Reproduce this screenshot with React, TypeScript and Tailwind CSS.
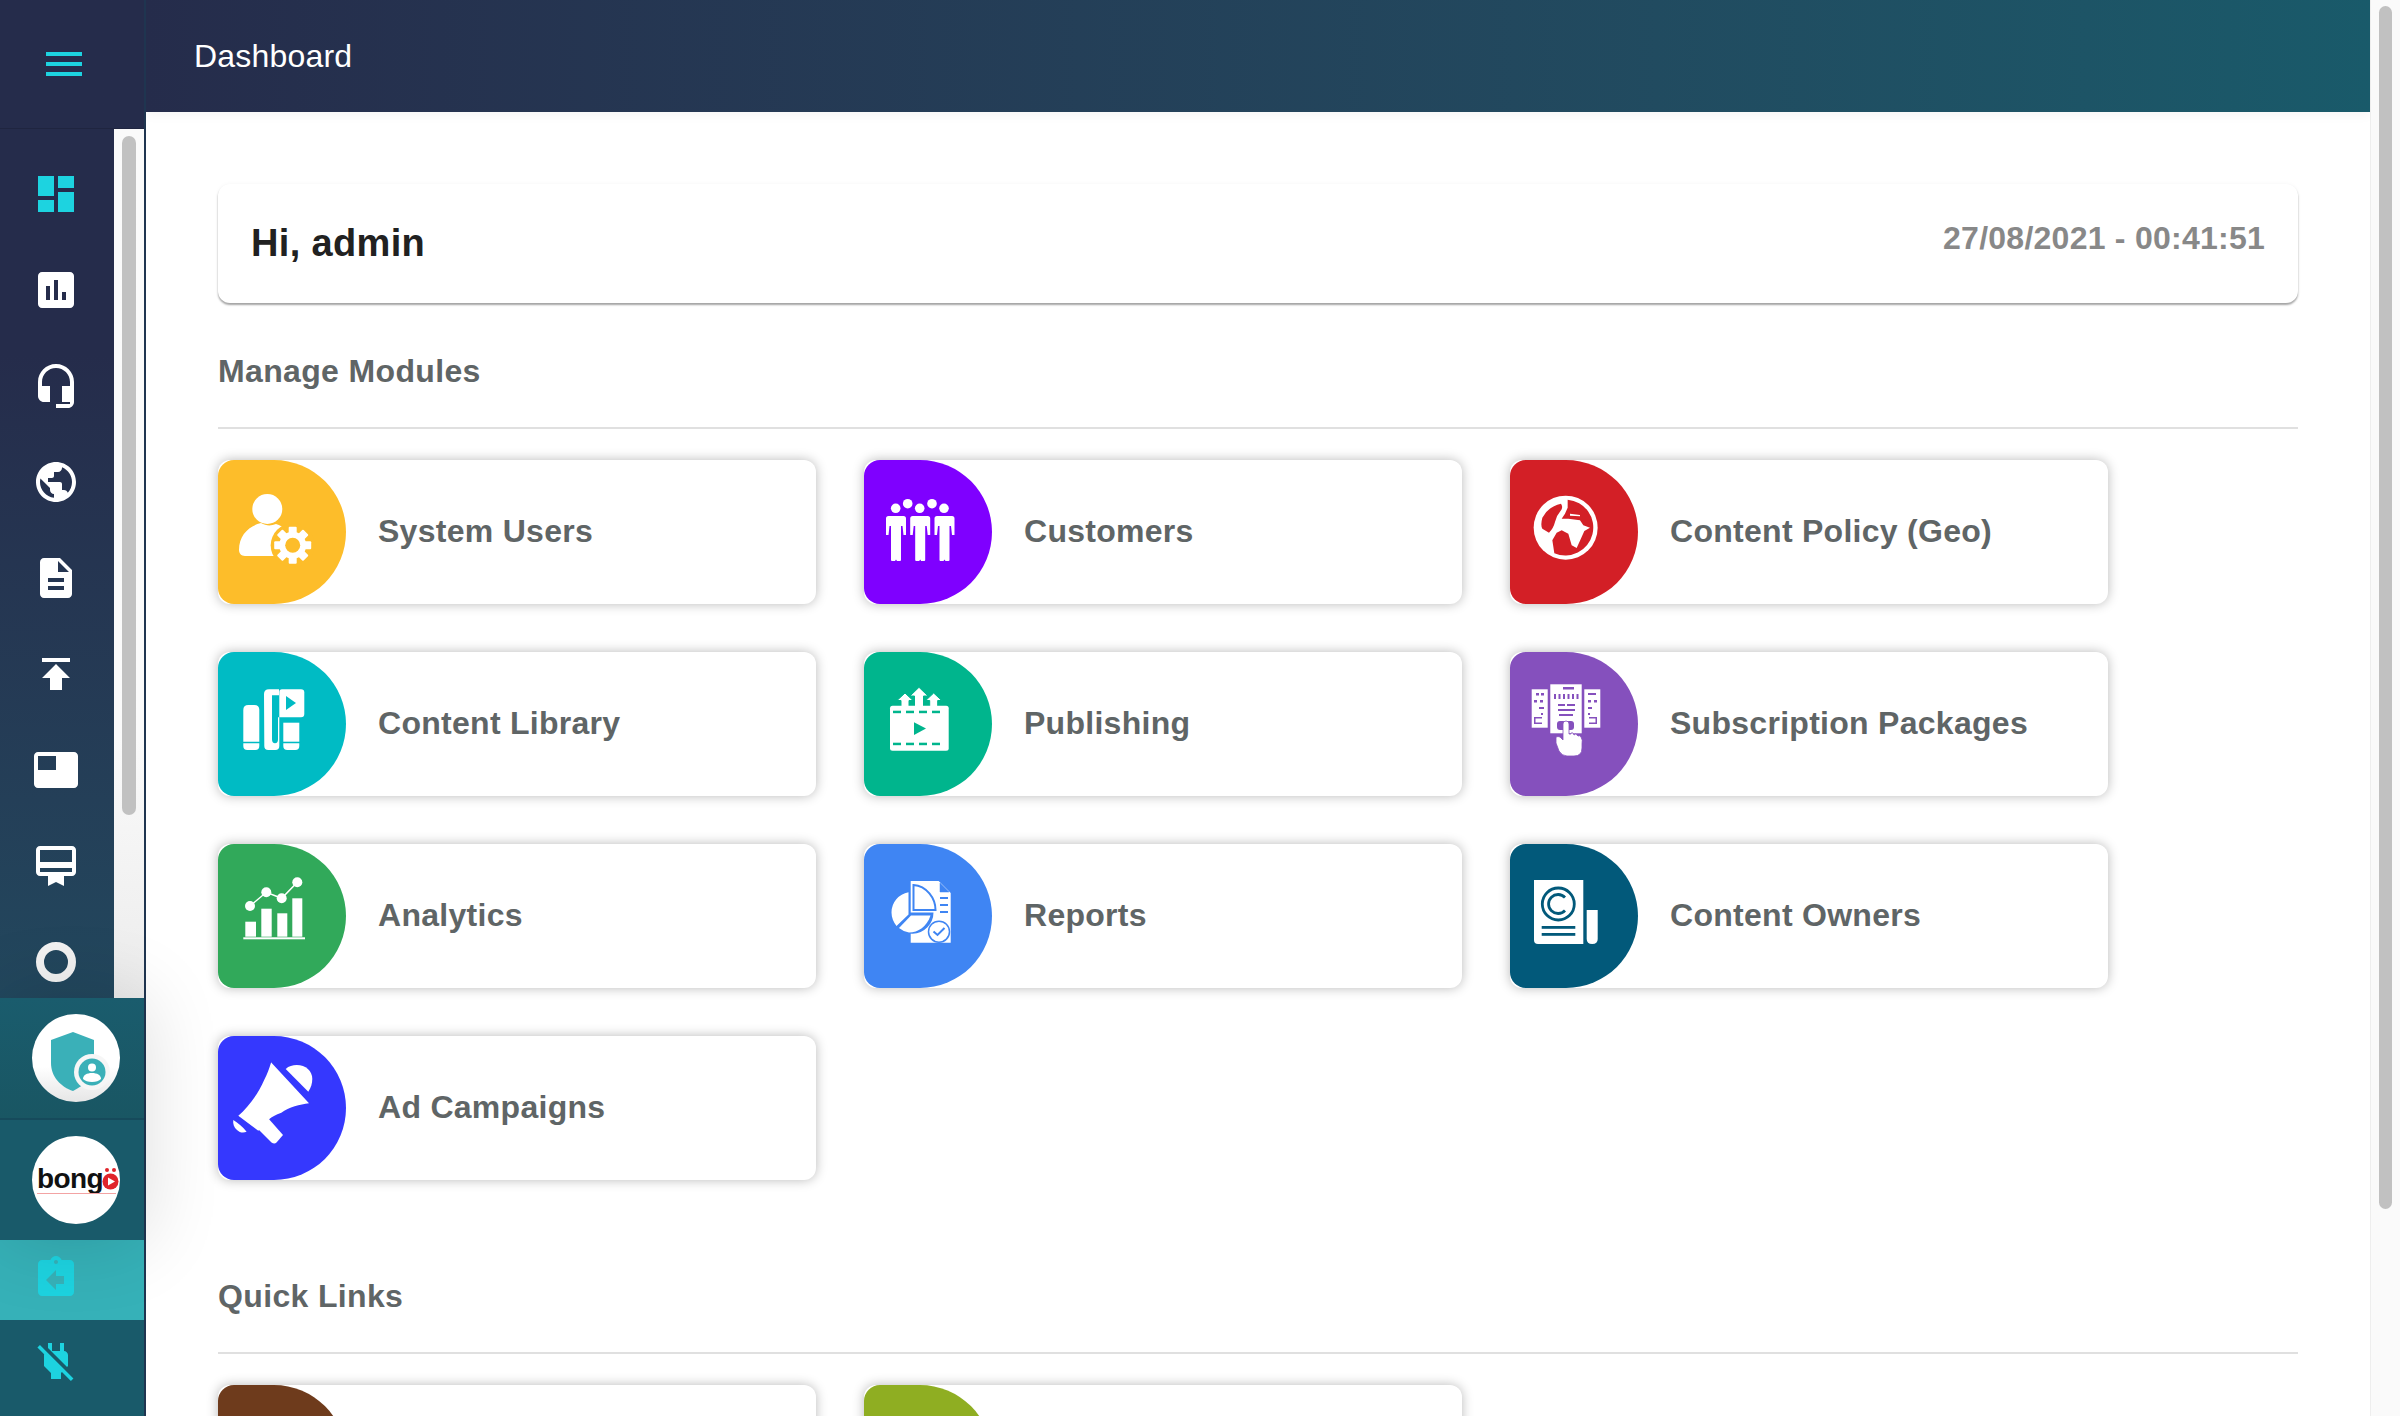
const MatIcon = ({ d, className }: { d: string; className: string }) => (
  <svg viewBox="0 0 24 24" className={`w-12 h-12 block fill-current ${className}`}>
    <path d={d} />
  </svg>
);

const navIcons = [
  { d: "M3 13h8V3H3v10zm0 8h8v-6H3v6zm10 0h8V11h-8v10zm0-18v6h8V3h-8z", className: "text-[#1dd3e0]" },
  { d: "M19 3H5c-1.1 0-2 .9-2 2v14c0 1.1.9 2 2 2h14c1.1 0 2-.9 2-2V5c0-1.1-.9-2-2-2zM9 17H7v-7h2v7zm4 0h-2V7h2v10zm4 0h-2v-4h2v4z", className: "text-white" },
  { d: "M12 1c-4.97 0-9 4.03-9 9v7c0 1.66 1.34 3 3 3h3v-8H5v-2c0-3.87 3.13-7 7-7s7 3.13 7 7v2h-4v8h4v1h-7v2h6c1.66 0 3-1.34 3-3V10c0-4.97-4.03-9-9-9z", className: "text-white" },
  { d: "M12 2C6.48 2 2 6.48 2 12s4.48 10 10 10 10-4.48 10-10S17.52 2 12 2zm-1 17.93c-3.95-.49-7-3.85-7-7.93 0-.62.08-1.21.21-1.79L9 15v1c0 1.1.9 2 2 2v1.93zm6.9-2.54c-.26-.81-1-1.39-1.9-1.39h-1v-3c0-.55-.45-1-1-1H8v-2h2c.55 0 1-.45 1-1V7h2c1.1 0 2-.9 2-2v-.41c2.93 1.19 5 4.06 5 7.41 0 2.08-.8 3.97-2.1 5.39z", className: "text-white" },
  { d: "M14 2H6c-1.1 0-1.99.9-1.99 2L4 20c0 1.1.89 2 1.99 2H18c1.1 0 2-.9 2-2V8l-6-6zm2 16H8v-2h8v2zm0-4H8v-2h8v2zm-3-5V3.5L18.5 9H13z", className: "text-white" },
  { d: "M5 4v2h14V4H5zm0 10h4v6h6v-6h4l-7-7-7 7z", className: "text-white" },
  { d: "M21 3H3c-1.1 0-2 .9-2 2v14c0 1.1.9 2 2 2h18c1.1 0 2-.9 2-2V5c0-1.1-.9-2-2-2zm-9 9H3V5h9v7z", className: "text-white" },
  { d: "M20 2H4c-1.11 0-2 .89-2 2v11c0 1.11.89 2 2 2h4v5l4-2 4 2v-5h4c1.11 0 2-.89 2-2V4c0-1.11-.89-2-2-2zm0 13H4v-2h16v2zm0-5H4V4h16v6z", className: "text-white" },
];

const TileSvg = ({ children }: { children: React.ReactNode }) => (
  <svg viewBox="0 0 128 144" className="w-[128px] h-[144px] block">
    {children}
  </svg>
);

const gearTeeth = [0, 45, 90, 135, 180, 225, 270, 315];

const SystemUsersIcon = () => (
  <TileSvg>
    <circle cx="49.3" cy="49" r="15" fill="#fff" />
    <path d="M21 90c0-15 10-24 22-27 5 3 10 3 15 1 8 2 12 8 14 18l-10 14H27c-4 0-6-3-6-6z" fill="#fff" />
    <circle cx="74.7" cy="85.3" r="22" fill="#fdbd2a" />
    {gearTeeth.map((a) => (
      <rect key={a} x="70.7" y="66.8" width="8" height="8" rx="1" fill="#fff" transform={`rotate(${a} 74.7 85.3)`} />
    ))}
    <circle cx="74.7" cy="85.3" r="13.5" fill="#fff" />
    <circle cx="74.7" cy="85.3" r="7.5" fill="#fdbd2a" />
  </TileSvg>
);

// one standing figure: shoulders and arms, then narrower legs with a small split at the feet
const personPath = (cx: number) =>
  `M${cx - 8} 56h16q2.500 0 2.500 2.500V75h-2.500l-1-9h-1.500V100q0 1-1 1h-3l-1-1.500-1 1.500h-3q-1 0-1-1V66h-1.500l-1 9h-2.500V58.500q0-2.500 2.500-2.500z`;

const CustomersIcon = () => (
  <TileSvg>
    <g fill="#fff">
      <circle cx="31.700" cy="48.300" r="4.800" />
      <circle cx="43.700" cy="43.700" r="4.800" />
      <circle cx="55.700" cy="48.300" r="4.800" />
      <circle cx="68" cy="43.700" r="4.800" />
      <circle cx="80" cy="48.300" r="4.800" />
      <path d={personPath(31.500)} />
      <path d={personPath(55.700)} />
      <path d={personPath(80)} />
    </g>
  </TileSvg>
);

const GeoIcon = () => (
  <TileSvg>
    <g transform="translate(15 27) scale(.3333)">
      <circle cx="122" cy="122" r="96" fill="#fff" />
      <path d="M108 50Q70 58 52 92Q46 115 52 125L72 137Q85 125 90 105Q95 85 108 70Q115 60 108 50z" fill="#d31f26" />
      <path d="M128 38A84 84 0 1 1 88 199L82 160L95 137L110 130L130 140L140 175L155 183L170 150L178 132L195 122L175 115L165 100L130 95L110 95L120 80L128 62Z" fill="#d31f26" />
      <path d="M135 80L165 84L165 88L135 86z" fill="#fff" />
    </g>
  </TileSvg>
);

const ContentLibraryIcon = () => (
  <TileSvg>
    <g fill="#fff">
      <path d="M25.3 58q0-5 5-5h6q5 0 5 5v31.7h-16z" />
      <path d="M25.3 91.3h16v2.7q0 4-4 4h-8q-4 0-4-4z" />
      <path d="M46 42q0-4.700 5-4.700h10v6h-7v44q0 4 3 4t3-4V65.300h1.300V94q0 4-4 4h-7q-4 0-4-4z" />
      <path d="M64 37.300h19q3.300 0 3.300 3.300v21.400q0 3.300-3.300 3.300H61.300V40q0-2.700 2.700-2.700z" />
      <rect x="65.300" y="70.700" width="16" height="19" />
      <path d="M65.300 91.300h16v2.700q0 4-4 4h-8q-4 0-4-4z" />
    </g>
    <path d="M68 44l10 7-10 7z" fill="#00bbc4" />
  </TileSvg>
);

const publishDashes = [29, 42, 55, 68];

const PublishingIcon = () => (
  <TileSvg>
    <path d="M41 41l8 7.500h-4v8h-8v-8h-4zM55 35.300l9 8.700h-4.500v12h-9V44H46zM69.700 41l8 7.500h-4v8h-8v-8h-4z" fill="#fff" stroke="#00b58d" strokeWidth="1" />
    <rect x="26" y="53.700" width="58.700" height="45" rx="2.500" fill="#fff" />
    {publishDashes.map((x) => (
      <g key={x} fill="#00b58d">
        <rect x={x} y="58.700" width="8" height="2.500" />
        <rect x={x} y="90.700" width="8" height="2.500" />
      </g>
    ))}
    <path d="M50 70.300l12 6.300-12 6.400z" fill="#00b58d" />
  </TileSvg>
);

const SubscriptionIcon = () => (
  <TileSvg>
    <rect x="21.700" y="37.300" width="16" height="38.400" fill="#fff" />
    <rect x="40.300" y="32.300" width="31.400" height="49" fill="#fff" />
    <rect x="74.300" y="37.300" width="16" height="38.400" fill="#fff" />
    <g fill="#8550bd">
      <rect x="26" y="41" width="3" height="2.500" />
      <rect x="31" y="41" width="3" height="2.500" />
      <rect x="24" y="48" width="3" height="2.500" />
      <rect x="30" y="48" width="3" height="2.500" />
      <rect x="29" y="55" width="5" height="2" />
      <rect x="31" y="61" width="2" height="2" />
      <path d="M24 65h8v1.500h-6.500v4h6.500V72H24z" />
      <rect x="53" y="35" width="11" height="2.500" />
      <rect x="44" y="42" width="2" height="5" />
      <rect x="48.500" y="42" width="2" height="5" />
      <rect x="53" y="42" width="2" height="5" />
      <rect x="57.500" y="42" width="2" height="5" />
      <rect x="62" y="42" width="2" height="5" />
      <rect x="66.500" y="42" width="2" height="5" />
      <rect x="48" y="52" width="7" height="2" />
      <rect x="57" y="52" width="8" height="2" />
      <rect x="48" y="57" width="17" height="2" />
      <rect x="49" y="62" width="14" height="2" />
      <rect x="78" y="41" width="8" height="2" />
      <rect x="78" y="48" width="3" height="2.500" />
      <rect x="84" y="48" width="3" height="2.500" />
      <rect x="78" y="55" width="4" height="2" />
      <rect x="78" y="61" width="2" height="2" />
      <path d="M79 65h8v7h-8v-1.500h6.500v-4H79z" />
      <rect x="47" y="69" width="17" height="9" rx="3" />
    </g>
    <path d="M53 72q0-3 3-3t3 3v10l2 0q0-2 2-1l1 2q2-2 3 0l1 1q2-1 3 1 2 3 1 7v4q0 8-8 8h-7q-5 0-8-5l-3-8v-6q2-1 4 0l3 3z" fill="#fff" stroke="#8550bd" strokeWidth=".8" />
  </TileSvg>
);

const AnalyticsIcon = () => (
  <TileSvg>
    <g fill="#fff">
      <rect x="27.300" y="77.700" width="10.700" height="15" />
      <rect x="43.300" y="64.700" width="10.400" height="28" />
      <rect x="59.300" y="69.300" width="10" height="23.400" />
      <rect x="74.300" y="54.300" width="10" height="38.400" />
      <rect x="25.300" y="93.300" width="61.700" height="2" />
      <circle cx="32" cy="62" r="5" />
      <circle cx="48.300" cy="48.300" r="5" />
      <circle cx="63.700" cy="54.300" r="5" />
      <circle cx="79.300" cy="38.300" r="5" />
    </g>
    <path d="M32 62L48.300 48.300 63.700 54.300 79.300 38.300" fill="none" stroke="#fff" strokeWidth="1.500" />
  </TileSvg>
);

const ReportsIcon = () => (
  <TileSvg>
    <path d="M46.700 37h28l12 12v49.700h-40z" fill="#fff" />
    <path d="M76 39l9 9h-9z" fill="#3f85f3" stroke="#3f85f3" strokeWidth=".5" />
    <path d="M49.500 41v25h22c0-12-9-24-22-25z" fill="#fff" stroke="#3f85f3" strokeWidth="2" />
    <path d="M53 45v18h15c-1-8-7-16-15-18z" fill="#fff" />
    <path d="M45.500 47a21.500 21.500 0 1 0 24 21.500H45.500z" fill="#3f85f3" />
    <path d="M44.500 48.200a20.500 20.500 0 0 0-17 20.300c0 5 2 10 5 13.500l12-11.500z" fill="#fff" />
    <path d="M35 84a20 20 0 0 0 10 4.500c9 0 18-6 21.500-17H47z" fill="#fff" />
    <g fill="#3f85f3">
      <rect x="76" y="53" width="8" height="2" />
      <rect x="76" y="60" width="8" height="2" />
      <rect x="76" y="67" width="8" height="2" />
    </g>
    <circle cx="75" cy="87.700" r="10.500" fill="#fff" stroke="#3f85f3" strokeWidth="1.500" />
    <path d="M69.500 87.500l4 3.500 7-7" fill="none" stroke="#3f85f3" strokeWidth="2" />
  </TileSvg>
);

const OwnersIcon = () => (
  <TileSvg>
    <path d="M24 36h49.300v64H28q-4 0-4-4z" fill="#fff" />
    <path d="M76.700 66h11v29q0 5-5.500 5t-5.500-5z" fill="#fff" />
    <circle cx="48.300" cy="60" r="16" fill="none" stroke="#02597a" strokeWidth="2.800" />
    <path d="M55 53.500a9.500 9.500 0 1 0 0 13" fill="none" stroke="#02597a" strokeWidth="2.800" />
    <rect x="31.700" y="82" width="33.600" height="2.800" fill="#02597a" />
    <rect x="31.700" y="89" width="33.600" height="2.800" fill="#02597a" />
  </TileSvg>
);

const AdIcon = () => (
  <TileSvg>
    <g fill="#fff">
      <path d="M53 26.300L91 67.300c-9 1-20 4-27.700 9.500-5 2-11 4-14 9l-9 9-20-15c9-8 19-20 26-36 3-6 5-11 6.700-17z" />
      <path d="M44 88l6-6 15 17-6.500 7.500q-2 2-5 0L40 93z" />
      <path d="M67.700 33c3-3 7-4 11-4 9 0 15.600 6 15.600 14 0 5-1.500 9-4 12.700z" />
      <path d="M15.300 84c5 3 9.500 7 13.300 11.700-3 1.500-7 1-9.600-1.700-3-2.500-4.300-6.500-3.700-10z" />
    </g>
  </TileSvg>
);

const moduleItems = [
  { label: "System Users", bg: "bg-[#fdbd2a]", icon: <SystemUsersIcon /> },
  { label: "Customers", bg: "bg-[#7f00ff]", icon: <CustomersIcon /> },
  { label: "Content Policy (Geo)", bg: "bg-[#d31f26]", icon: <GeoIcon /> },
  { label: "Content Library", bg: "bg-[#00bbc4]", icon: <ContentLibraryIcon /> },
  { label: "Publishing", bg: "bg-[#00b58d]", icon: <PublishingIcon /> },
  { label: "Subscription Packages", bg: "bg-[#8550bd]", icon: <SubscriptionIcon /> },
  { label: "Analytics", bg: "bg-[#31a95a]", icon: <AnalyticsIcon /> },
  { label: "Reports", bg: "bg-[#3f85f3]", icon: <ReportsIcon /> },
  { label: "Content Owners", bg: "bg-[#02597a]", icon: <OwnersIcon /> },
  { label: "Ad Campaigns", bg: "bg-[#3538fe]", icon: <AdIcon /> },
];

const ModuleCard = ({ label, bg, icon }: { label?: string; bg: string; icon?: React.ReactNode }) => (
  <div className="h-[144px] flex items-center bg-white rounded-[12px] shadow-[0_0_12px_rgba(0,0,0,0.28)]">
    <div className={`w-[128px] h-[144px] shrink-0 rounded-l-[16px] rounded-r-[72px] ${bg}`}>{icon}</div>
    {label && <div className="ml-[32px] mt-[-2px] text-[32px] font-bold tracking-[0.28px] text-[#5f6566]">{label}</div>}
  </div>
);

const SectionTitle = ({ title, className }: { title: string; className: string }) => (
  <>
    <div className={`h-[40px] leading-[40px] text-[32px] font-bold tracking-[0.35px] text-[#5f6566] ${className}`}>{title}</div>
    <div className="mt-[36px] h-[2px] bg-[#e0e0e0]" />
  </>
);

const Sidebar = () => (
  <div className="relative z-10 w-[146px] h-full shrink-0 flex flex-col border-r-2 border-[#1f3550] bg-gradient-to-b from-[#252c4b] from-[25%] to-[#195a6a]">
    <div className="h-[129px] shrink-0 pl-[40px] pt-[40px] border-b border-[#1f2540]">
      <MatIcon d="M3 18h18v-2H3v2zm0-5h18v-2H3v2zm0-7v2h18V6H3z" className="text-[#1dd3e0]" />
    </div>
    <div className="h-[869px] shrink-0 flex overflow-hidden">
      <div className="w-[114px] pl-[32px] pt-[41px] flex flex-col gap-[48px]">
        {navIcons.map((icon) => (
          <MatIcon key={icon.d} d={icon.d} className={icon.className} />
        ))}
        <svg viewBox="0 0 24 24" className="w-12 h-12 block shrink-0">
          <circle cx="12" cy="12" r="8" fill="none" stroke="#f2f2f2" strokeWidth="4" />
        </svg>
      </div>
      <div className="w-[30px] px-2 pt-[7px] bg-gradient-to-b from-[#fafafa] from-[70%] to-[#ececec]">
        <div className="h-[679px] rounded-lg bg-[#c1c1c1]" />
      </div>
    </div>
    <div className="relative shrink-0 shadow-[0_0_80px_rgba(0,0,0,0.14)]">
      <div className="h-[122px] pl-[32px] pt-[16px] bg-gradient-to-b from-[#1a5c6d] to-[#195663] border-b-2 border-[#164a5b]">
        <div className="w-[88px] h-[88px] rounded-full bg-gradient-to-b from-white from-[60%] to-[#e6e6e6]">
          <svg viewBox="0 0 88 88" className="w-[88px] h-[88px] block">
            <path d="M41 18l21 8v22c0 14-9 23-21 29-12-4-22-14-22-28V26z" fill="#3ab0b8" />
            <circle cx="60" cy="58" r="18" fill="#f6f6f6" />
            <circle cx="60" cy="58" r="13.500" fill="#3ab0b8" />
            <circle cx="60" cy="53.500" r="4" fill="#fff" />
            <path d="M51 65c0-4 4-6 9-6s9 2 9 6c-2 2-5 3-9 3s-7-1-9-3z" fill="#fff" />
          </svg>
        </div>
      </div>
      <div className="h-[120px] pl-[32px] pt-[16px] bg-[#195a6a]">
        <div className="relative w-[88px] h-[88px] rounded-full bg-white overflow-hidden flex items-center pl-[5px]">
          <span className="font-bold text-[28px] leading-none tracking-[-0.6px] text-[#111] mt-[-3px]">bong</span>
          <svg viewBox="0 0 17 26" className="w-[17px] h-[26px] block shrink-0 ml-[-1px]">
            <circle cx="5" cy="3" r="2" fill="#e0242b" />
            <circle cx="12" cy="3" r="2" fill="#e0242b" />
            <circle cx="8.500" cy="14.500" r="8" fill="#e0242b" />
            <path d="M6 10.500l7 4-7 4z" fill="#fff" />
          </svg>
          <div className="absolute left-[5px] right-[4px] top-[57px] h-[1px] bg-[#f3a3a3]" />
        </div>
      </div>
    </div>
    <div className="h-[80px] shrink-0 pl-[32px] pt-[14px] bg-[#36b1b8]">
      <MatIcon
        d="M19 3h-4.180C14.400 1.840 13.300 1 12 1c-1.300 0-2.400.84-2.820 2H5c-1.100 0-2 .9-2 2v14c0 1.100.9 2 2 2h14c1.100 0 2-.9 2-2V5c0-1.100-.9-2-2-2zm-7 0c.55 0 1 .45 1 1s-.45 1-1 1-1-.45-1-1 .45-1 1-1zm4 12h-4v3l-5-5 5-5v3h4v4z"
        className="text-[#1dd3e0]"
      />
    </div>
    <div className="flex-1 pl-[32px] pt-[17px] bg-[#195a6a]">
      <MatIcon
        d="M18 14.490V9c0-1-1.010-2.010-2-2V3h-2v4h-4V3H8v2.480l9.510 9.500.49-.49zm-1.760 1.770L7.200 7.200l-.01.01L3.980 4 2.710 5.250l3.360 3.360C6.040 8.740 6 8.870 6 9v5.480L9.500 18v3h5v-3l.48-.48L19.450 22l1.260-1.260-4.470-4.480z"
        className="text-[#1dd3e0]"
      />
    </div>
  </div>
);

export default function App() {
  return (
    <div className="w-[2400px] h-[1416px] flex overflow-hidden bg-white font-['Liberation_Sans',Arial,sans-serif]">
      <Sidebar />
      <div className="flex-1 min-w-0 h-full overflow-hidden">
        <div className="h-[112px] pl-[48px] flex items-center bg-gradient-to-r from-[#252c4b] to-[#195a6a] shadow-[0_4px_10px_rgba(0,0,0,0.04)]">
          <span className="text-[32px] tracking-[0.2px] text-white mt-[-1px]">Dashboard</span>
        </div>
        <div className="px-[72px] pt-[72px]">
          <div className="h-[119px] px-[33px] flex items-center justify-between rounded-[12px] bg-white shadow-[0_2px_2px_rgba(0,0,0,0.35),0_0_4px_rgba(0,0,0,0.04)]">
            <span className="text-[38px] font-bold tracking-[0.35px] text-[#212121]">Hi, admin</span>
            <span className="text-[32px] font-bold tracking-[0.25px] text-[#888888] mt-[-11px]">27/08/2021 - 00:41:51</span>
          </div>
          <SectionTitle title="Manage Modules" className="mt-[48px]" />
          <div className="mt-[31px] grid grid-cols-[598px_598px_598px] gap-x-[48px] gap-y-[48px]">
            {moduleItems.map((item) => (
              <ModuleCard key={item.label} label={item.label} bg={item.bg} icon={item.icon} />
            ))}
          </div>
          <SectionTitle title="Quick Links" className="mt-[96px]" />
          <div className="mt-[31px] grid grid-cols-[598px_598px_598px] gap-x-[48px]">
            <ModuleCard bg="bg-[#6e3b1c]" />
            <ModuleCard bg="bg-[#8fae22]" />
          </div>
        </div>
      </div>
      <div className="w-[30px] h-full shrink-0 px-2 pt-[6px] bg-[#fafafa] border-l border-[#eeeeee]">
        <div className="h-[1203px] rounded-lg bg-[#c1c1c1]" />
      </div>
    </div>
  );
}
